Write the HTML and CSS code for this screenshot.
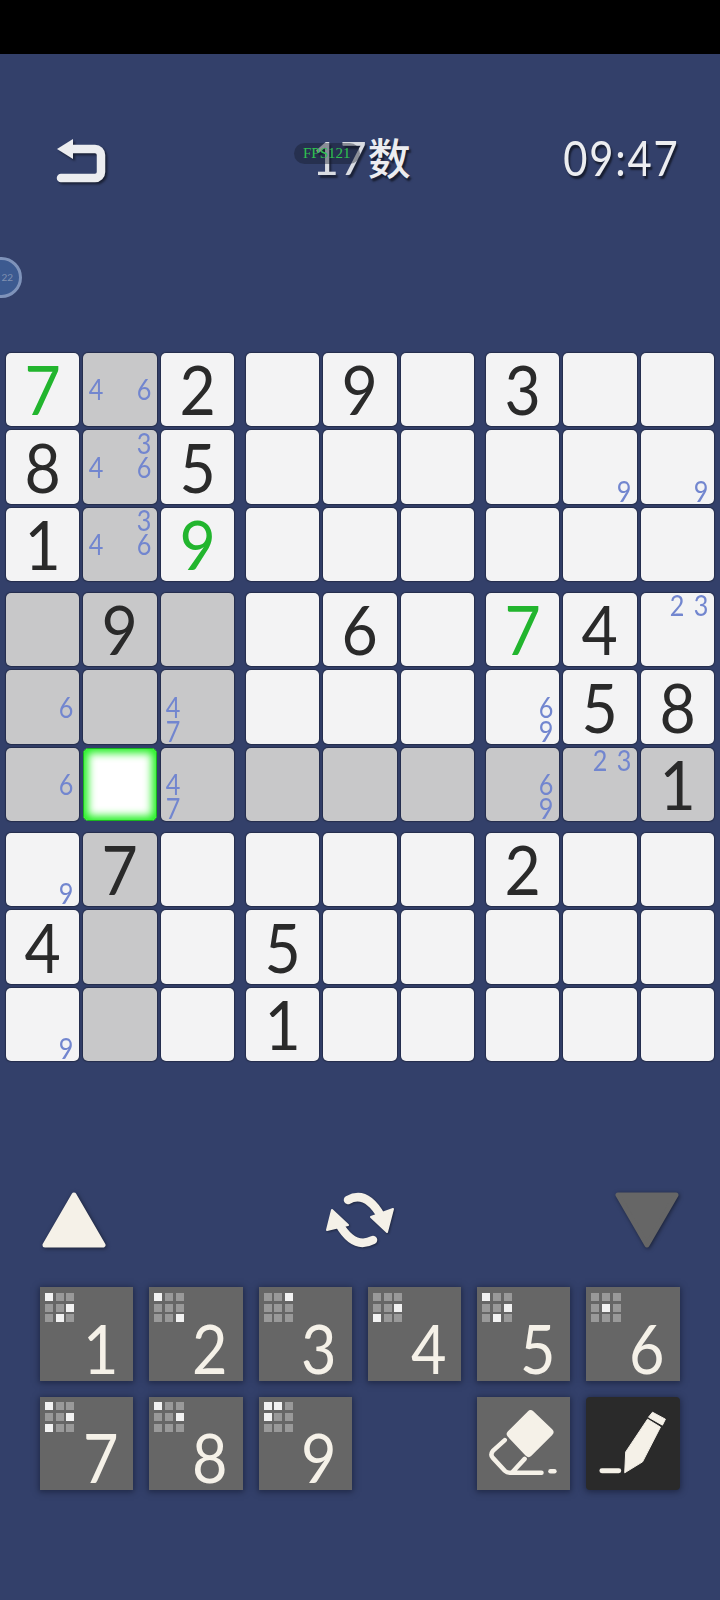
FILE: index.html
```html
<!DOCTYPE html>
<html lang="en">
<head>
    <meta charset="UTF-8">
    <meta name="viewport" content="width=device-width, initial-scale=1.0">
    <title>17数</title>
    <link rel="stylesheet" href="styles.css">
</head>
<body>
    <div class="status-bar"></div>

    <header class="top-bar">
        <button class="back-btn" aria-label="Back">
            <svg width="50" height="46" viewBox="0 0 50 46">
                <polygon class="icon-fill" points="1,11 17,1 17,21"/>
                <path class="icon-line" d="M15 11H39a6 6 0 0 1 6 6V34a6 6 0 0 1 -6 6H5"/>
            </svg>
        </button>
        <div class="puzzle-title"><span class="title-num">17</span><span class="title-kanji">数</span></div>
        <div class="timer">09:47</div>
        <div class="fps-pill">FPS121</div>
    </header>
    <div class="float-ball">22</div>

    <main class="board">
        <!-- top row of boxes -->
        <div class="box">
            <div class="cell given green"><span>7</span></div>
            <div class="cell hl notes"><b class="n4">4</b><b class="n6">6</b></div>
            <div class="cell given"><span>2</span></div>
            <div class="cell given"><span>8</span></div>
            <div class="cell hl notes"><b class="n3">3</b><b class="n4">4</b><b class="n6">6</b></div>
            <div class="cell given"><span>5</span></div>
            <div class="cell given"><span>1</span></div>
            <div class="cell hl notes"><b class="n3">3</b><b class="n4">4</b><b class="n6">6</b></div>
            <div class="cell given green"><span>9</span></div>
        </div>
        <div class="box">
            <div class="cell"></div>
            <div class="cell given"><span>9</span></div>
            <div class="cell"></div>
            <div class="cell"></div>
            <div class="cell"></div>
            <div class="cell"></div>
            <div class="cell"></div>
            <div class="cell"></div>
            <div class="cell"></div>
        </div>
        <div class="box">
            <div class="cell given"><span>3</span></div>
            <div class="cell"></div>
            <div class="cell"></div>
            <div class="cell"></div>
            <div class="cell notes"><b class="n9">9</b></div>
            <div class="cell notes"><b class="n9">9</b></div>
            <div class="cell"></div>
            <div class="cell"></div>
            <div class="cell"></div>
        </div>

        <!-- middle row of boxes -->
        <div class="box">
            <div class="cell hl"></div>
            <div class="cell hl given"><span>9</span></div>
            <div class="cell hl"></div>
            <div class="cell hl notes"><b class="n6">6</b></div>
            <div class="cell hl"></div>
            <div class="cell hl notes"><b class="n4">4</b><b class="n7">7</b></div>
            <div class="cell hl notes"><b class="n6">6</b></div>
            <div class="cell selected"></div>
            <div class="cell hl notes"><b class="n4">4</b><b class="n7">7</b></div>
        </div>
        <div class="box">
            <div class="cell"></div>
            <div class="cell given"><span>6</span></div>
            <div class="cell"></div>
            <div class="cell"></div>
            <div class="cell"></div>
            <div class="cell"></div>
            <div class="cell hl"></div>
            <div class="cell hl"></div>
            <div class="cell hl"></div>
        </div>
        <div class="box">
            <div class="cell given green"><span>7</span></div>
            <div class="cell given"><span>4</span></div>
            <div class="cell notes"><b class="n2">2</b><b class="n3">3</b></div>
            <div class="cell notes"><b class="n6">6</b><b class="n9">9</b></div>
            <div class="cell given"><span>5</span></div>
            <div class="cell given"><span>8</span></div>
            <div class="cell hl notes"><b class="n6">6</b><b class="n9">9</b></div>
            <div class="cell hl notes"><b class="n2">2</b><b class="n3">3</b></div>
            <div class="cell hl given"><span>1</span></div>
        </div>

        <!-- bottom row of boxes -->
        <div class="box">
            <div class="cell notes"><b class="n9">9</b></div>
            <div class="cell hl given"><span>7</span></div>
            <div class="cell"></div>
            <div class="cell given"><span>4</span></div>
            <div class="cell hl"></div>
            <div class="cell"></div>
            <div class="cell notes"><b class="n9">9</b></div>
            <div class="cell hl"></div>
            <div class="cell"></div>
        </div>
        <div class="box">
            <div class="cell"></div>
            <div class="cell"></div>
            <div class="cell"></div>
            <div class="cell given"><span>5</span></div>
            <div class="cell"></div>
            <div class="cell"></div>
            <div class="cell given"><span>1</span></div>
            <div class="cell"></div>
            <div class="cell"></div>
        </div>
        <div class="box">
            <div class="cell given"><span>2</span></div>
            <div class="cell"></div>
            <div class="cell"></div>
            <div class="cell"></div>
            <div class="cell"></div>
            <div class="cell"></div>
            <div class="cell"></div>
            <div class="cell"></div>
            <div class="cell"></div>
        </div>
    </main>

    <section class="mode-row">
        <svg class="arrow" width="64" height="58" viewBox="0 0 64 58">
            <polygon class="tri-light" points="32,4 61,54 3,54"/>
        </svg>
        <svg class="swap" width="90" height="80" viewBox="0 0 90 80">
            <path class="icon-line cream" d="M33 20Q51 10 66 36"/>
            <polygon class="icon-fill cream" points="78,29 56,37 72,52"/>
            <path class="icon-line cream" d="M58 60Q39 70 24 44"/>
            <polygon class="icon-fill cream" points="17,30 33,45 12,50"/>
        </svg>
        <svg class="arrow" width="64" height="58" viewBox="0 0 64 58">
            <polygon class="tri-dark" points="3,4 61,4 32,54"/>
        </svg>
    </section>

    <section class="keypad">
        <button class="key">
            <div class="mini"><i class="on"></i><i></i><i></i><i></i><i></i><i class="on"></i><i></i><i class="on"></i><i></i></div>
            <span>1</span>
        </button>
        <button class="key">
            <div class="mini"><i class="on"></i><i></i><i></i><i></i><i></i><i></i><i></i><i></i><i class="on"></i></div>
            <span>2</span>
        </button>
        <button class="key">
            <div class="mini"><i></i><i></i><i class="on"></i><i></i><i></i><i></i><i></i><i></i><i></i></div>
            <span>3</span>
        </button>
        <button class="key">
            <div class="mini"><i></i><i></i><i></i><i></i><i></i><i class="on"></i><i class="on"></i><i></i><i></i></div>
            <span>4</span>
        </button>
        <button class="key">
            <div class="mini"><i class="on"></i><i></i><i></i><i></i><i></i><i class="on"></i><i></i><i class="on"></i><i></i></div>
            <span>5</span>
        </button>
        <button class="key">
            <div class="mini"><i></i><i></i><i></i><i></i><i class="on"></i><i></i><i></i><i></i><i></i></div>
            <span>6</span>
        </button>
        <button class="key">
            <div class="mini"><i class="on"></i><i></i><i></i><i></i><i></i><i class="on"></i><i class="on"></i><i></i><i></i></div>
            <span>7</span>
        </button>
        <button class="key">
            <div class="mini"><i class="on"></i><i></i><i></i><i></i><i></i><i class="on"></i><i></i><i></i><i></i></div>
            <span>8</span>
        </button>
        <button class="key">
            <div class="mini"><i class="on"></i><i class="on"></i><i></i><i class="on"></i><i></i><i></i><i></i><i></i><i></i></div>
            <span>9</span>
        </button>
        <div class="key-gap"></div>
        <button class="key tool" aria-label="Erase">
            <svg width="94" height="94" viewBox="0 0 94 94">
                <polygon class="eraser-body" points="54,18 73,36 52,57 34,38"/>
                <path class="tool-line" d="M28 44L16 55Q13 59 16 62L28 75Q30 77 33 77H65M48 63L36 76"/>
                <path class="tool-line" d="M74 75.500H78"/>
            </svg>
        </button>
        <button class="key tool active" aria-label="Notes">
            <svg width="94" height="94" viewBox="0 0 94 94">
                <polygon class="pen-body" points="67,16 80,23 77,29 63,21"/>
                <polygon class="pen-body" points="62,23 75,31 57,66 39,77 40,56"/>
                <path class="tool-line thick" d="M16 75H33"/>
            </svg>
        </button>
    </section>
</body>
</html>
```

FILE: styles.css
```css
/* Basic Reset */
* {
    margin: 0;
    padding: 0;
    box-sizing: border-box;
}
body {
    width: 720px;
    height: 1600px;
    position: relative;
    overflow: hidden;
    background-color: #33406a;
    font-family: Lato, "Noto Sans CJK SC", sans-serif;
}
button {
    border: none;
    background: none;
    font-family: inherit;
}
.status-bar {
    height: 54px;
    background-color: #000;
}

/* Header */
.top-bar {
    height: 208px;
    position: relative;
    display: grid;
    grid-template-columns: 1fr auto 1fr;
    align-items: center;
    padding: 0 41px 0 56px;
    color: #ecedf0;
    text-shadow: 2px 3px 2px rgba(0, 0, 0, 0.55);
}
.back-btn {
    justify-self: start;
    height: 46px;
    margin-top: 6px;
    filter: drop-shadow(2px 2px 1px rgba(0, 0, 0, 0.5));
}
.icon-fill {
    fill: #ecedf0;
}
.icon-line {
    fill: none;
    stroke: #ecedf0;
    stroke-width: 8.500;
    stroke-linecap: round;
}
.icon-fill.cream {
    fill: #f5f1e8;
    stroke: #f5f1e8;
    stroke-width: 2;
    stroke-linejoin: round;
}
.icon-line.cream {
    stroke: #f5f1e8;
}
.puzzle-title {
    display: flex;
    align-items: baseline;
    line-height: 46px;
    transform: translateX(-6px);
}
.title-num {
    font-size: 46px;
    letter-spacing: 1px;
    opacity: 0.9;
}
.title-kanji {
    font-size: 43px;
    font-weight: 500;
}
.timer {
    justify-self: end;
    font-size: 48px;
    line-height: 46px;
    font-weight: 400;
    letter-spacing: 2px;
    transform: scaleX(0.87);
    transform-origin: right center;
}
.fps-pill {
    position: absolute;
    left: 294px;
    top: 89px;
    width: 66px;
    height: 21px;
    border-radius: 11px;
    padding-left: 9px;
    background: rgba(20, 24, 40, 0.4);
    color: #2fc04f;
    font-family: "Liberation Serif", serif;
    font-size: 15px;
    line-height: 21px;
    text-shadow: none;
}
.float-ball {
    position: absolute;
    left: -19px;
    top: 257px;
    width: 41px;
    height: 41px;
    border-radius: 50%;
    border: 3px solid #7f93ba;
    background-color: #3c5a90;
    color: #7f90b0;
    font-size: 10px;
    line-height: 35px;
    text-align: right;
    padding-right: 6px;
}

/* Board */
.board {
    margin: 90.7px 0 0 5.5px;
    display: grid;
    grid-template-columns: repeat(3, 228.5px);
    gap: 11.5px;
}
.box {
    display: grid;
    grid-template-columns: repeat(3, 73.5px);
    grid-auto-rows: 73.5px;
    gap: 4px;
}
.cell {
    background-color: #f3f3f4;
    border-radius: 5px;
    box-shadow: 0 0 1px 1px rgba(20, 25, 45, 0.5);
    display: flex;
    align-items: center;
    justify-content: center;
}
.cell.hl {
    background-color: #c8c8c9;
}
.cell.selected {
    background-color: #fff;
    border: 1px solid #19b61e;
    box-shadow: inset 0 0 9px 4px #1ff01f;
}
.given span {
    font-size: 68px;
    line-height: 68px;
    color: #2a2a2a;
    transform: scaleX(0.92);
}
.green span {
    color: #22b52e;
}
.notes {
    display: grid;
    grid-template-columns: repeat(3, 24px);
    grid-template-rows: repeat(3, 24px);
    justify-content: center;
    align-content: center;
}
.notes b {
    font-size: 28px;
    line-height: 24px;
    font-weight: 400;
    text-align: center;
    color: #7286cf;
    transform: scaleX(0.9);
}
.n2 { grid-area: 1 / 2; }
.n3 { grid-area: 1 / 3; }
.n4 { grid-area: 2 / 1; }
.n6 { grid-area: 2 / 3; }
.n7 { grid-area: 3 / 1; }
.n9 { grid-area: 3 / 3; }

/* Up, swap, down */
.mode-row {
    margin-top: 129px;
    height: 60px;
    padding: 0 41.500px;
    display: flex;
    justify-content: space-between;
    align-items: center;
}
.arrow {
    filter: drop-shadow(1px 1px 2px rgba(0, 0, 0, 0.5));
}
.swap {
    filter: drop-shadow(1px 1px 1px rgba(0, 0, 0, 0.4));
}
.tri-light, .tri-dark {
    stroke-width: 5;
    stroke-linejoin: round;
}
.tri-light {
    fill: #f5f1e8;
    stroke: #f5f1e8;
}
.tri-dark {
    fill: #666;
    stroke: #666;
}

/* Keypad */
.keypad {
    margin-top: 37.3px;
    padding-left: 40px;
    display: grid;
    grid-template-columns: repeat(6, 93.3px);
    grid-auto-rows: 93.3px;
    gap: 16px;
}
.key {
    position: relative;
    background-color: #666;
    box-shadow: 0 1px 6px 1px rgba(15, 20, 40, 0.55);
    display: flex;
    justify-content: flex-end;
    align-items: flex-end;
    padding: 0 13px 0 0;
    color: #f5f1e8;
}
.key span {
    font-size: 68px;
    line-height: 68px;
    font-weight: 400;
    margin-bottom: -1px;
    transform: scaleX(0.9);
}
.mini {
    position: absolute;
    left: 5px;
    top: 5.500px;
    display: grid;
    grid-template-columns: repeat(3, 8px);
    grid-auto-rows: 8px;
    gap: 2.700px;
}
.mini i {
    background-color: #999;
}
.mini i.on {
    background-color: #f2f2f2;
}
.key.tool {
    padding: 0;
}
.key.active {
    background-color: #2a2a2a;
    border-radius: 4px;
}
.eraser-body {
    fill: #f5f1e8;
    stroke: #f5f1e8;
    stroke-width: 8;
    stroke-linejoin: round;
}
.pen-body {
    fill: #f5f1e8;
    stroke: #f5f1e8;
    stroke-width: 1;
    stroke-linejoin: round;
}
.tool-line {
    fill: none;
    stroke: #f5f1e8;
    stroke-width: 4.500;
    stroke-linecap: round;
    stroke-linejoin: round;
}
.tool-line.thick {
    stroke-width: 5;
}
```
